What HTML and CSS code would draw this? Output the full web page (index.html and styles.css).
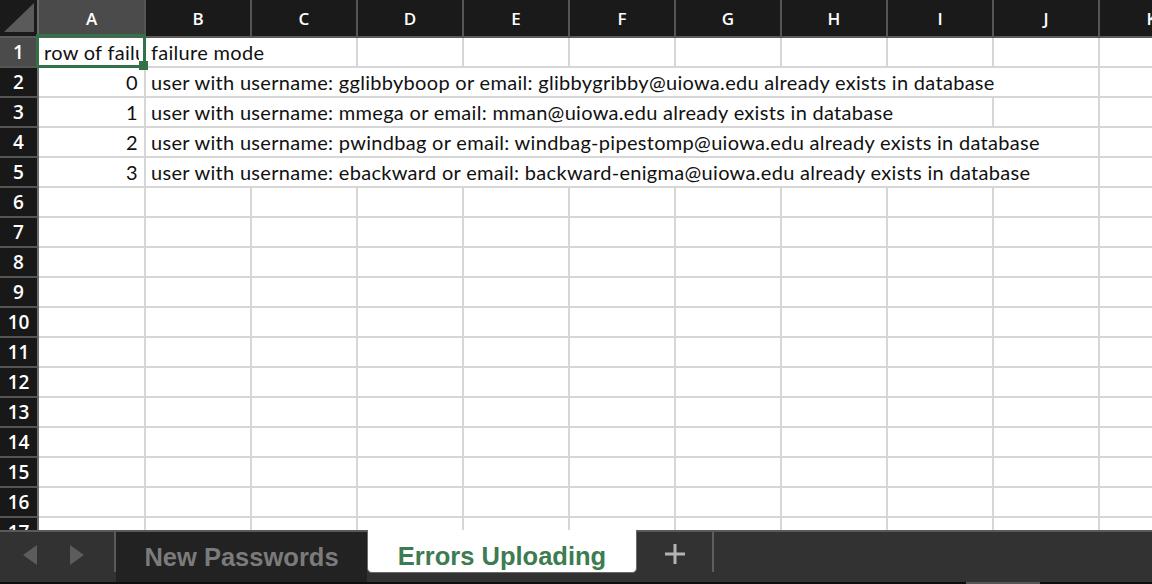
FILE: index.html
```html
<!DOCTYPE html>
<html lang="en">
<head>
<meta charset="utf-8">
<title>Errors Uploading</title>
<link rel="stylesheet" href="styles.css">
</head>
<body>
<div class="app">
  <div class="grid">
    <div class="corner"><svg width="37" height="36" viewBox="0 0 37 36"><polygon points="4,32 34,32 34,3" fill="#5a5a5a"/></svg></div>
    <div class="ch sel">A</div><div class="ch">B</div><div class="ch">C</div><div class="ch">D</div><div class="ch">E</div><div class="ch">F</div><div class="ch">G</div><div class="ch">H</div><div class="ch">I</div><div class="ch">J</div><div class="ch">K</div>

    <div class="rh sel">1</div>
    <div class="c a1"><span class="clip">row of failure</span><div class="selbox"></div><div class="handle"></div></div>
    <div class="c txt span2">failure mode</div>
    <div class="c"></div><div class="c"></div><div class="c"></div><div class="c"></div><div class="c"></div><div class="c"></div><div class="c"></div><div class="c"></div>

    <div class="rh">2</div><div class="c num">0</div>
    <div class="c txt span9">user with username: gglibbyboop or email: glibbygribby@uiowa.edu already exists in database</div>
    <div class="c"></div>

    <div class="rh">3</div><div class="c num">1</div>
    <div class="c txt span8">user with username: mmega or email: mman@uiowa.edu already exists in database</div>
    <div class="c"></div><div class="c"></div>

    <div class="rh">4</div><div class="c num">2</div>
    <div class="c txt span9">user with username: pwindbag or email: windbag-pipestomp@uiowa.edu already exists in database</div>
    <div class="c"></div>

    <div class="rh">5</div><div class="c num">3</div>
    <div class="c txt span9">user with username: ebackward or email: backward-enigma@uiowa.edu already exists in database</div>
    <div class="c"></div>

    <div class="rh">6</div><div class="c"></div><div class="c"></div><div class="c"></div><div class="c"></div><div class="c"></div><div class="c"></div><div class="c"></div><div class="c"></div><div class="c"></div><div class="c"></div><div class="c"></div>
    <div class="rh">7</div><div class="c"></div><div class="c"></div><div class="c"></div><div class="c"></div><div class="c"></div><div class="c"></div><div class="c"></div><div class="c"></div><div class="c"></div><div class="c"></div><div class="c"></div>
    <div class="rh">8</div><div class="c"></div><div class="c"></div><div class="c"></div><div class="c"></div><div class="c"></div><div class="c"></div><div class="c"></div><div class="c"></div><div class="c"></div><div class="c"></div><div class="c"></div>
    <div class="rh">9</div><div class="c"></div><div class="c"></div><div class="c"></div><div class="c"></div><div class="c"></div><div class="c"></div><div class="c"></div><div class="c"></div><div class="c"></div><div class="c"></div><div class="c"></div>
    <div class="rh">10</div><div class="c"></div><div class="c"></div><div class="c"></div><div class="c"></div><div class="c"></div><div class="c"></div><div class="c"></div><div class="c"></div><div class="c"></div><div class="c"></div><div class="c"></div>
    <div class="rh">11</div><div class="c"></div><div class="c"></div><div class="c"></div><div class="c"></div><div class="c"></div><div class="c"></div><div class="c"></div><div class="c"></div><div class="c"></div><div class="c"></div><div class="c"></div>
    <div class="rh">12</div><div class="c"></div><div class="c"></div><div class="c"></div><div class="c"></div><div class="c"></div><div class="c"></div><div class="c"></div><div class="c"></div><div class="c"></div><div class="c"></div><div class="c"></div>
    <div class="rh">13</div><div class="c"></div><div class="c"></div><div class="c"></div><div class="c"></div><div class="c"></div><div class="c"></div><div class="c"></div><div class="c"></div><div class="c"></div><div class="c"></div><div class="c"></div>
    <div class="rh">14</div><div class="c"></div><div class="c"></div><div class="c"></div><div class="c"></div><div class="c"></div><div class="c"></div><div class="c"></div><div class="c"></div><div class="c"></div><div class="c"></div><div class="c"></div>
    <div class="rh">15</div><div class="c"></div><div class="c"></div><div class="c"></div><div class="c"></div><div class="c"></div><div class="c"></div><div class="c"></div><div class="c"></div><div class="c"></div><div class="c"></div><div class="c"></div>
    <div class="rh">16</div><div class="c"></div><div class="c"></div><div class="c"></div><div class="c"></div><div class="c"></div><div class="c"></div><div class="c"></div><div class="c"></div><div class="c"></div><div class="c"></div><div class="c"></div>
    <div class="rh">17</div><div class="c"></div><div class="c"></div><div class="c"></div><div class="c"></div><div class="c"></div><div class="c"></div><div class="c"></div><div class="c"></div><div class="c"></div><div class="c"></div><div class="c"></div>
  </div>

  <div class="tabbar">
    <div class="nav">
      <svg class="arrow" width="14" height="20" viewBox="0 0 14 20"><polygon points="14,0 14,20 0,10" fill="#5c5c5c"/></svg>
      <svg class="arrow" width="14" height="20" viewBox="0 0 14 20"><polygon points="0,0 0,20 14,10" fill="#5c5c5c"/></svg>
    </div>
    <div class="tab">New Passwords</div>
    <div class="tab active">Errors Uploading</div>
    <div class="add"><svg width="20" height="20" viewBox="0 0 20 20"><rect x="8.5" y="0" width="3" height="20" fill="#b3b3b3"/><rect x="0" y="8.5" width="20" height="3" fill="#b3b3b3"/></svg></div>
    <div class="rest"></div>
  </div>
  <div class="bottomline"><div class="scrollthumb"></div></div>
</div>
</body>
</html>
```
FILE: styles.css
```css
html, body {
  margin: 0;
  padding: 0;
  background: #fff;
}
.app {
  width: 1152px;
  height: 584px;
  overflow: hidden;
  display: flex;
  flex-direction: column;
}
.grid {
  height: 530px;
  flex: none;
  overflow: hidden;
  display: grid;
  grid-template-columns: 39px 107px repeat(10, 106px);
  grid-template-rows: 38px;
  grid-auto-rows: 30px;
  font-family: "Lato", "Open Sans", sans-serif;
}
.corner {
  background: #1a1a1a;
  border-right: 2px solid #6a6a6a;
  border-bottom: 2px solid #5c5c5c;
}
.corner svg { display: block; }
.ch {
  background: #1a1a1a;
  color: #fff;
  border-right: 2px solid #555;
  border-bottom: 2px solid #5c5c5c;
  display: flex;
  align-items: center;
  justify-content: center;
  font-family: "Open Sans", sans-serif;
  font-weight: 600;
  font-size: 17px;
  padding-top: 1px;
}
.ch.sel, .rh.sel { background: #4b4b4b; }
.rh {
  background: #181818;
  color: #fff;
  border-right: 2px solid #6e6e6e;
  border-bottom: 2px solid #555;
  display: flex;
  align-items: center;
  justify-content: center;
  font-family: "Open Sans", sans-serif;
  font-weight: 600;
  font-size: 19px;
}
.c {
  background: #fff;
  border-right: 2px solid #d6d6d6;
  border-bottom: 2px solid #d6d6d6;
  color: #111;
  font-size: 20px;
  letter-spacing: 0.3px;
  white-space: nowrap;
  display: flex;
  align-items: center;
  padding: 0 5px 0 5px;
  min-width: 0;
}
.txt { overflow: hidden; }
.num { justify-content: flex-end; padding-right: 6px; }
.span9 { grid-column: span 9; }
.span8 { grid-column: span 8; }
.span2 { grid-column: span 2; }
.a1 { position: relative; overflow: visible; z-index: 2; }
.a1 .clip {
  display: block;
  overflow: hidden;
  width: 100%;
}
.selbox {
  position: absolute;
  left: -3px;
  top: -4px;
  right: -2px;
  bottom: -2px;
  border: 3px solid #33714a;
}
.handle {
  position: absolute;
  right: -4px;
  bottom: -4px;
  width: 9px;
  height: 9px;
  background: #33714a;
}
.tabbar {
  flex: none;
  height: 50px;
  background: #323232;
  border-top: 2px solid #5a5a5a;
  display: flex;
  font-family: "Liberation Sans", Arial, sans-serif;
  font-weight: bold;
  font-size: 25.5px;
}
.nav {
  width: 116px;
  height: 40px;
  border-right: 2px solid #5a5a5a;
  display: flex;
  align-items: center;
  gap: 33px;
  padding-left: 23px;
  box-sizing: border-box;
  padding-top: 6px;
}
.arrow { display: block; }
.tab {
  width: 251px;
  background: #222;
  color: #7b7b7b;
  display: flex;
  align-items: center;
  justify-content: center;
  box-sizing: border-box;
}
.tab.active {
  width: 270px;
  height: 43px;
  margin-top: -2px;
  background: #fff;
  color: #3d7b51;
  border-left: 1px solid #6a6a6a;
  border-right: 1px solid #6a6a6a;
  border-bottom: 1px solid #6a6a6a;
  border-radius: 0 0 5px 5px;
  padding-top: 10px;
}
.add {
  width: 77px;
  height: 40px;
  border-right: 2px solid #5e5e5e;
  display: flex;
  align-items: center;
  justify-content: center;
  padding-top: 4px;
  box-sizing: border-box;
}
.add svg { display: block; }
.rest { flex: 1; }
.bottomline {
  flex: none;
  height: 2px;
  background: #0e0e0e;
  position: relative;
}
.scrollthumb {
  position: absolute;
  left: 966px;
  width: 74px;
  top: 0;
  height: 2px;
  background: #555;
}
```
